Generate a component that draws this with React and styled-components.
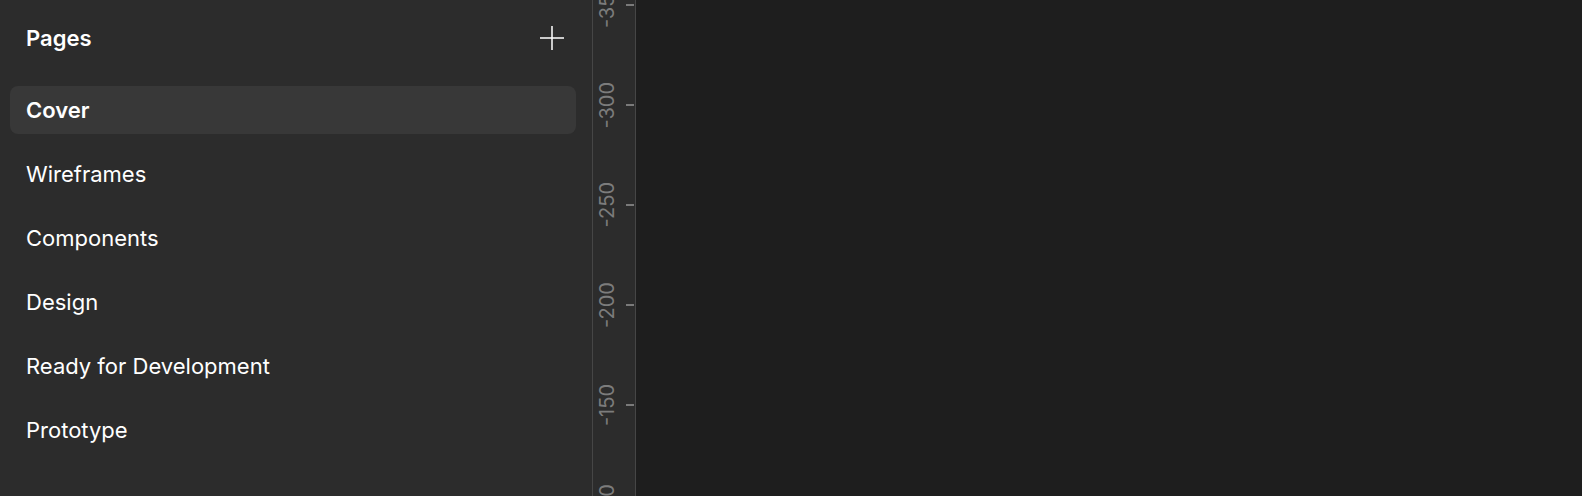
import React from "react";
import styled, { createGlobalStyle } from "styled-components";

const pages = [
  "Cover",
  "Wireframes",
  "Components",
  "Design",
  "Ready for Development",
  "Prototype",
];

const marks = [-350, -300, -250, -200, -150, -100];

const App = () => {
  return (
    <>
      <GlobalStyle />
      <Container>
        <Sidebar>
          <Header>
            <Title>Pages</Title>
            <AddButton aria-label="Add page">
              <svg width="24" height="24" viewBox="0 0 24 24">
                <path
                  d="M12 0v24M0 12h24"
                  stroke="#fff"
                  strokeWidth="1.5"
                  fill="none"
                />
              </svg>
            </AddButton>
          </Header>
          <PageList>
            {pages.map((page, i) => (
              <PageItem key={page} active={i === 0}>
                {page}
              </PageItem>
            ))}
          </PageList>
        </Sidebar>
        <Ruler>
          {marks.map((m) => (
            <Mark key={m}>
              <Label>{m}</Label>
              <Tick />
            </Mark>
          ))}
        </Ruler>
        <Canvas />
      </Container>
    </>
  );
};

export default App;

const GlobalStyle = createGlobalStyle`
  html, body {
    margin: 0;
    padding: 0;
    height: 100%;
    background: #1e1e1e;
  }
  #root {
    height: 100%;
  }
  * {
    box-sizing: border-box;
  }
`;

const Container = styled.div`
  display: flex;
  height: 100vh;
  overflow: hidden;
  font-family: Inter, "Noto Sans", sans-serif;
  color: #fff;
`;

const Sidebar = styled.aside`
  width: 592px;
  flex-shrink: 0;
  background: #2c2c2c;
  display: flex;
  flex-direction: column;
`;

const Header = styled.div`
  display: flex;
  align-items: center;
  justify-content: space-between;
  height: 76px;
  padding: 0 28px 0 26px;
`;

const Title = styled.h2`
  margin: 0;
  font-size: 22px;
  font-weight: 600;
`;

const AddButton = styled.button`
  background: none;
  border: none;
  padding: 0;
  width: 24px;
  height: 24px;
  display: flex;
  cursor: pointer;
`;

const PageList = styled.ul`
  list-style: none;
  margin: 10px 0 0;
  padding: 0 16px 0 10px;
  display: flex;
  flex-direction: column;
  gap: 16px;
`;

const PageItem = styled.li`
  height: 48px;
  display: flex;
  align-items: center;
  padding: 0 16px;
  border-radius: 8px;
  font-size: 22px;
  font-weight: ${(p) => (p.active ? 600 : 400)};
  background: ${(p) => (p.active ? "#383838" : "transparent")};
  cursor: pointer;
`;

const Ruler = styled.div`
  width: 44px;
  flex-shrink: 0;
  background: #2c2c2c;
  border-left: 1px solid #464646;
  border-right: 1px solid #464646;
  display: flex;
  flex-direction: column;
  margin-top: -45px;
`;

const Mark = styled.div`
  height: 100px;
  flex-shrink: 0;
  display: flex;
  align-items: center;
  padding: 0 1px 0 4px;
  gap: 9px;
`;

const Label = styled.span`
  writing-mode: vertical-rl;
  transform: rotate(180deg);
  font-size: 20px;
  line-height: 20px;
  color: #7c7c7c;
  width: 20px;
`;

const Tick = styled.span`
  width: 8px;
  height: 2px;
  background: #7a7a7a;
`;

const Canvas = styled.main`
  flex: 1;
  background: #1e1e1e;
`;
